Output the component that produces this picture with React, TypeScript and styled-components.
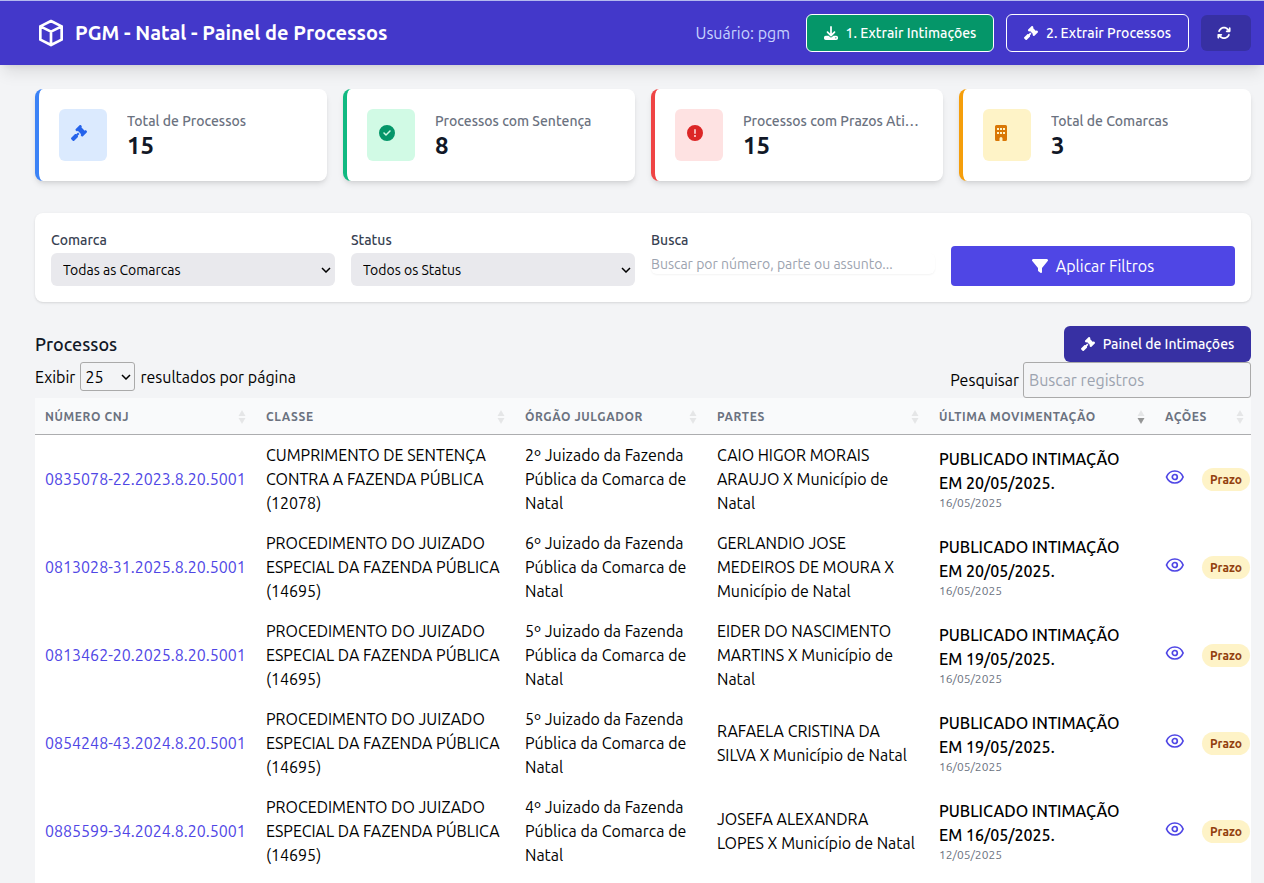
import React from "react";
import styled, { createGlobalStyle } from "styled-components";
import {
  FaArrowsRotate,
  FaCircleCheck,
  FaCircleExclamation,
  FaDownload,
  FaFilter,
  FaGavel,
} from "react-icons/fa6";

const GlobalStyle = createGlobalStyle`
  *, *::before, *::after { box-sizing: border-box; }
  body {
    margin: 0;
    background: #f3f4f6;
    color: #000;
    font-family: Ubuntu, Roboto, "Noto Sans", sans-serif;
    font-size: 16px;
    line-height: 24px;
  }
  button, input, select { font: inherit; color: inherit; margin: 0; }
  h1, h2, p { margin: 0; }
`;

/* Header */
const Header = styled.header`
  display: flex;
  align-items: center;
  justify-content: space-between;
  min-height: 65px;
  padding: 0 13px 0 35px;
  border-top: 1px solid #b4b9ee;
  background: #4338ca;
  color: #fff;
  box-shadow: 0 10px 15px -3px rgba(0, 0, 0, 0.1), 0 4px 6px -4px rgba(0, 0, 0, 0.1);
`;

const Brand = styled.div`
  display: flex;
  align-items: center;
  gap: 8px;
`;

const Title = styled.h1`
  font-size: 20px;
  line-height: 28px;
  font-weight: 700;
`;

const HeaderActions = styled.div`
  display: flex;
  align-items: center;
  gap: 12px;
`;

const UserName = styled.span`
  margin-right: 4px;
  color: #c7d2fe;
`;

const Button = styled.button<{ $bg: string; $outlined?: boolean; $width?: number }>`
  display: inline-flex;
  align-items: center;
  justify-content: center;
  gap: 8px;
  min-width: ${(p) => p.$width ?? 0}px;
  padding: 8px 14px;
  border: ${(p) => (p.$outlined ? "1px solid #fff" : "0")};
  border-radius: 6px;
  background: ${(p) => p.$bg};
  color: #fff;
  font-size: 14px;
  line-height: 20px;
  font-weight: 500;
  white-space: nowrap;
  cursor: pointer;
`;

const RefreshButton = styled(Button)`
  height: 36px;
  padding: 8px 20px 8px 16px;
`;

/* Summary cards */
const Main = styled.main`
  padding: 24px 13px 0 35px;
`;

const Cards = styled.section`
  display: grid;
  grid-template-columns: repeat(4, minmax(0, 1fr));
  gap: 16px;
  margin-bottom: 32px;
`;

const Card = styled.article<{ $accent: string }>`
  display: flex;
  align-items: center;
  gap: 20px;
  padding: 20px;
  border-left: 4px solid ${(p) => p.$accent};
  border-radius: 8px;
  background: #fff;
  box-shadow: 0 4px 6px -1px rgba(0, 0, 0, 0.1), 0 2px 4px -2px rgba(0, 0, 0, 0.1);
`;

const CardIcon = styled.div<{ $bg: string; $fg: string }>`
  flex: none;
  width: 48px;
  height: 52px;
  padding: 16px 12px;
  border-radius: 6px;
  background: ${(p) => p.$bg};
  color: ${(p) => p.$fg};
  svg { display: block; }
`;

const CardText = styled.div`
  min-width: 0;
  padding-top: 2px;
`;

const CardLabel = styled.p`
  overflow: hidden;
  text-overflow: ellipsis;
  white-space: nowrap;
  color: #6b7280;
  font-size: 14px;
  line-height: 20px;
  font-weight: 500;
`;

const CardValue = styled.p`
  color: #111827;
  font-size: 24px;
  line-height: 30px;
  font-weight: 700;
`;

/* Filters */
const Filters = styled.form`
  display: grid;
  grid-template-columns: repeat(4, minmax(0, 1fr));
  gap: 16px;
  margin-bottom: 24px;
  padding: 16px;
  border-radius: 8px;
  background: #fff;
  box-shadow: 0 1px 3px rgba(0, 0, 0, 0.1), 0 1px 2px -1px rgba(0, 0, 0, 0.1);
`;

const Field = styled.div`
  display: flex;
  flex-direction: column;
  gap: 2px;
`;

const FieldLabel = styled.label`
  color: #374151;
  font-size: 14px;
  line-height: 22px;
  font-weight: 500;
`;

const SelectWrap = styled.span`
  position: relative;
  display: flex;
  svg {
    position: absolute;
    right: 4px;
    top: 50%;
    transform: translateY(-50%);
    pointer-events: none;
  }
`;

const FilterSelect = styled.select`
  appearance: none;
  width: 100%;
  height: 33px;
  padding: 0 28px 0 12px;
  border: 0;
  border-radius: 6px;
  background: #e9e9ed;
  font-size: 14px;
`;

const FilterInput = styled.input`
  width: 100%;
  height: 21px;
  padding: 0;
  border: 0;
  border-radius: 6px;
  background: #fff;
  box-shadow: 0 1px 2px rgba(0, 0, 0, 0.05);
  font-size: 14px;
  &::placeholder { color: #9ca3af; opacity: 1; }
`;

const ApplyButton = styled(Button)`
  align-self: end;
  height: 40px;
  border-radius: 4px;
  font-size: 16px;
  line-height: 24px;
  font-weight: 400;
`;

/* Table section */
const SectionHead = styled.div`
  display: flex;
  align-items: center;
  justify-content: space-between;
`;

const SectionTitle = styled.h2`
  color: #111827;
  font-size: 18px;
  line-height: 28px;
  font-weight: 500;
`;

const TableControls = styled.div`
  display: flex;
  align-items: flex-start;
  justify-content: space-between;
`;

const LengthLabel = styled.label`
  display: flex;
  align-items: center;
  gap: 5px;
`;

const LengthSelect = styled.select`
  appearance: none;
  width: 55px;
  height: 29px;
  padding: 0 4px;
  border: 1px solid #aaa;
  border-radius: 3px;
  background: transparent;
`;

const SearchLabel = styled.label`
  display: flex;
  align-items: center;
  gap: 4px;
`;

const SearchInput = styled.input`
  width: 228px;
  height: 36px;
  padding: 5px;
  border: 1px solid #aaa;
  border-radius: 3px;
  background: transparent;
  &::placeholder { color: #9ca3af; opacity: 1; }
`;

const TablePanel = styled.div`
  padding-bottom: 8px;
  background: #fff;
`;

const Table = styled.table`
  width: 100%;
  table-layout: fixed;
  border-collapse: separate;
  border-spacing: 0;
`;

const Col = styled.col<{ $share: number }>`
  width: ${(p) => (p.$share / 1216) * 100}%;
`;

const Th = styled.th`
  padding: 11px 10px 9px;
  border-bottom: 1px solid #acadaf;
  background: #f9fafb;
  color: #6b7280;
  text-align: left;
  &:last-child { padding-right: 7px; }
`;

const SortButton = styled.button`
  display: flex;
  align-items: center;
  justify-content: space-between;
  width: 100%;
  padding: 0;
  border: 0;
  background: none;
  font-size: 12px;
  line-height: 16px;
  font-weight: 700;
  letter-spacing: 0.05em;
  text-transform: uppercase;
  white-space: nowrap;
  cursor: pointer;
`;

const Td = styled.td`
  height: 88px;
  padding: 8px 12px 8px 10px;
  vertical-align: middle;
`;

const CaseLink = styled.a`
  color: #4f46e5;
  text-decoration: none;
  white-space: nowrap;
`;

const Movement = styled.div`
  font-weight: 500;
`;

const MovementDate = styled.div`
  color: #6b7280;
  font-size: 12px;
  line-height: 16px;
`;

const RowActions = styled.div`
  display: flex;
  align-items: flex-end;
  gap: 18px;
`;

const ViewLink = styled.a`
  display: flex;
  align-items: center;
  height: 24px;
  padding-bottom: 4px;
  color: #4f46e5;
`;

const Badge = styled.span`
  flex: none;
  width: 48px;
  padding: 4px 0 3px;
  border-radius: 12px;
  background: #fef3c7;
  color: #92400e;
  font-size: 12px;
  line-height: 16px;
  font-weight: 700;
  text-align: center;
`;

const CubeIcon = () => (
  <svg width="32" height="32" viewBox="0 0 24 24" fill="none" stroke="currentColor" strokeWidth="2" strokeLinecap="round" strokeLinejoin="round" aria-hidden="true">
    <path d="M20 7l-8-4-8 4m16 0l-8 4m8-4v10l-8 4m0-10L4 7m8 4v10M4 7v10l8 4" />
  </svg>
);

const BuildingIcon = () => (
  <svg width="12" height="16" viewBox="0 0 12 16" fill="currentColor" fillRule="evenodd" aria-hidden="true">
    <path d="M1.500 0h9A1.500 1.500 0 0 1 12 1.500v13a1.500 1.500 0 0 1-1.500 1.500h-3v-2.500a1.500 1.500 0 0 0-3 0V16h-3A1.500 1.500 0 0 1 0 14.500v-13A1.500 1.500 0 0 1 1.500 0zM2 3v2h2V3zM5 3v2h2V3zM8 3v2h2V3zM2 7v2h2V7zM5 7v2h2V7zM8 7v2h2V7z" />
  </svg>
);

const Chevron = () => (
  <svg width="10" height="6" viewBox="0 0 10 6" fill="none" stroke="#000" strokeWidth="1.500" aria-hidden="true">
    <path d="M1 1l4 4 4-4" />
  </svg>
);

const EyeIcon = () => (
  <svg width="19" height="14" viewBox="0 0 19 14" fill="none" stroke="currentColor" strokeWidth="1.700" aria-hidden="true">
    <path d="M1.500 7C3 3.200 5.900 1 9.800 1s6.800 2.200 8.300 6c-1.500 3.800-4.400 6-8.300 6S3 10.800 1.500 7z" />
    <circle cx="9.800" cy="7" r="2.500" />
  </svg>
);

const SortIcon = ({ descending }: { descending?: boolean }) => (
  <svg width="8" height="16" viewBox="0 0 8 16" fill="#000" aria-hidden="true">
    <path d="M4 1l3.500 6h-7z" opacity=".08" />
    <path d="M4 15L.5 9h7z" opacity={descending ? 0.4 : 0.08} />
  </svg>
);

const stats = [
  { label: "Total de Processos", value: 15, accent: "#3b82f6", bg: "#dbeafe", fg: "#2563eb", Icon: FaGavel },
  { label: "Processos com Sentença", value: 8, accent: "#10b981", bg: "#d1fae5", fg: "#059669", Icon: FaCircleCheck },
  { label: "Processos com Prazos Ativos", value: 15, accent: "#ef4444", bg: "#fee2e2", fg: "#dc2626", Icon: FaCircleExclamation },
  { label: "Total de Comarcas", value: 3, accent: "#f59e0b", bg: "#fef3c7", fg: "#d97706", Icon: BuildingIcon },
];

const columns = [
  { label: "Número CNJ", share: 221 },
  { label: "Classe", share: 259 },
  { label: "Órgão Julgador", share: 192 },
  { label: "Partes", share: 222 },
  { label: "Última Movimentação", share: 226, descending: true },
  { label: "Ações", share: 96 },
];

const special = "PROCEDIMENTO DO JUIZADO ESPECIAL DA FAZENDA PÚBLICA (14695)";

const rows = [
  { id: "0835078-22.2023.8.20.5001", kind: "CUMPRIMENTO DE SENTENÇA CONTRA A FAZENDA PÚBLICA (12078)", court: 2, parties: "CAIO HIGOR MORAIS ARAUJO X Município de Natal", published: "20/05/2025", date: "16/05/2025" },
  { id: "0813028-31.2025.8.20.5001", kind: special, court: 6, parties: "GERLANDIO JOSE MEDEIROS DE MOURA X Município de Natal", published: "20/05/2025", date: "16/05/2025" },
  { id: "0813462-20.2025.8.20.5001", kind: special, court: 5, parties: "EIDER DO NASCIMENTO MARTINS X Município de Natal", published: "19/05/2025", date: "16/05/2025" },
  { id: "0854248-43.2024.8.20.5001", kind: special, court: 5, parties: "RAFAELA CRISTINA DA SILVA X Município de Natal", published: "19/05/2025", date: "16/05/2025" },
  { id: "0885599-34.2024.8.20.5001", kind: special, court: 4, parties: "JOSEFA ALEXANDRA LOPES X Município de Natal", published: "16/05/2025", date: "12/05/2025" },
];

export default function App() {
  return (
    <>
      <GlobalStyle />
      <Header>
        <Brand>
          <CubeIcon />
          <Title>PGM - Natal - Painel de Processos</Title>
        </Brand>
        <HeaderActions>
          <UserName>Usuário: pgm</UserName>
          <Button type="button" $bg="#059669" $outlined $width={188}>
            <FaDownload />
            1. Extrair Intimações
          </Button>
          <Button type="button" $bg="transparent" $outlined $width={183}>
            <FaGavel />
            2. Extrair Processos
          </Button>
          <RefreshButton type="button" $bg="#3730a3" aria-label="Atualizar">
            <FaArrowsRotate />
          </RefreshButton>
        </HeaderActions>
      </Header>

      <Main>
        <Cards>
          {stats.map(({ label, value, accent, bg, fg, Icon }) => (
            <Card key={label} $accent={accent}>
              <CardIcon $bg={bg} $fg={fg}>
                <Icon />
              </CardIcon>
              <CardText>
                <CardLabel>{label}</CardLabel>
                <CardValue>{value}</CardValue>
              </CardText>
            </Card>
          ))}
        </Cards>

        <Filters onSubmit={(e) => e.preventDefault()}>
          <Field>
            <FieldLabel htmlFor="comarca">Comarca</FieldLabel>
            <SelectWrap>
              <FilterSelect id="comarca">
                <option>Todas as Comarcas</option>
              </FilterSelect>
              <Chevron />
            </SelectWrap>
          </Field>
          <Field>
            <FieldLabel htmlFor="status">Status</FieldLabel>
            <SelectWrap>
              <FilterSelect id="status">
                <option>Todos os Status</option>
              </FilterSelect>
              <Chevron />
            </SelectWrap>
          </Field>
          <Field>
            <FieldLabel htmlFor="busca">Busca</FieldLabel>
            <FilterInput id="busca" type="text" placeholder="Buscar por número, parte ou assunto..." />
          </Field>
          <ApplyButton type="submit" $bg="#4f46e5">
            <FaFilter />
            Aplicar Filtros
          </ApplyButton>
        </Filters>

        <SectionHead>
          <SectionTitle>Processos</SectionTitle>
          <Button type="button" $bg="#3730a3" $width={187}>
            <FaGavel />
            Painel de Intimações
          </Button>
        </SectionHead>

        <TableControls>
          <LengthLabel>
            Exibir
            <SelectWrap>
              <LengthSelect>
                <option>25</option>
              </LengthSelect>
              <Chevron />
            </SelectWrap>
            resultados por página
          </LengthLabel>
          <SearchLabel>
            Pesquisar
            <SearchInput type="search" placeholder="Buscar registros" />
          </SearchLabel>
        </TableControls>

        <TablePanel>
          <Table>
            <colgroup>
              {columns.map((c) => (
                <Col key={c.label} $share={c.share} />
              ))}
            </colgroup>
            <thead>
              <tr>
                {columns.map((c) => (
                  <Th key={c.label} scope="col" aria-sort={c.descending ? "descending" : undefined}>
                    <SortButton type="button">
                      {c.label}
                      <SortIcon descending={c.descending} />
                    </SortButton>
                  </Th>
                ))}
              </tr>
            </thead>
            <tbody>
              {rows.map((r) => (
                <tr key={r.id}>
                  <Td>
                    <CaseLink href="#processo">{r.id}</CaseLink>
                  </Td>
                  <Td>{r.kind}</Td>
                  <Td>{`${r.court}º Juizado da Fazenda Pública da Comarca de Natal`}</Td>
                  <Td>{r.parties}</Td>
                  <Td>
                    <Movement>{`PUBLICADO INTIMAÇÃO EM ${r.published}.`}</Movement>
                    <MovementDate>{r.date}</MovementDate>
                  </Td>
                  <Td>
                    <RowActions>
                      <ViewLink href="#detalhes" aria-label="Ver detalhes">
                        <EyeIcon />
                      </ViewLink>
                      <Badge>Prazo</Badge>
                    </RowActions>
                  </Td>
                </tr>
              ))}
            </tbody>
          </Table>
        </TablePanel>
      </Main>
    </>
  );
}
